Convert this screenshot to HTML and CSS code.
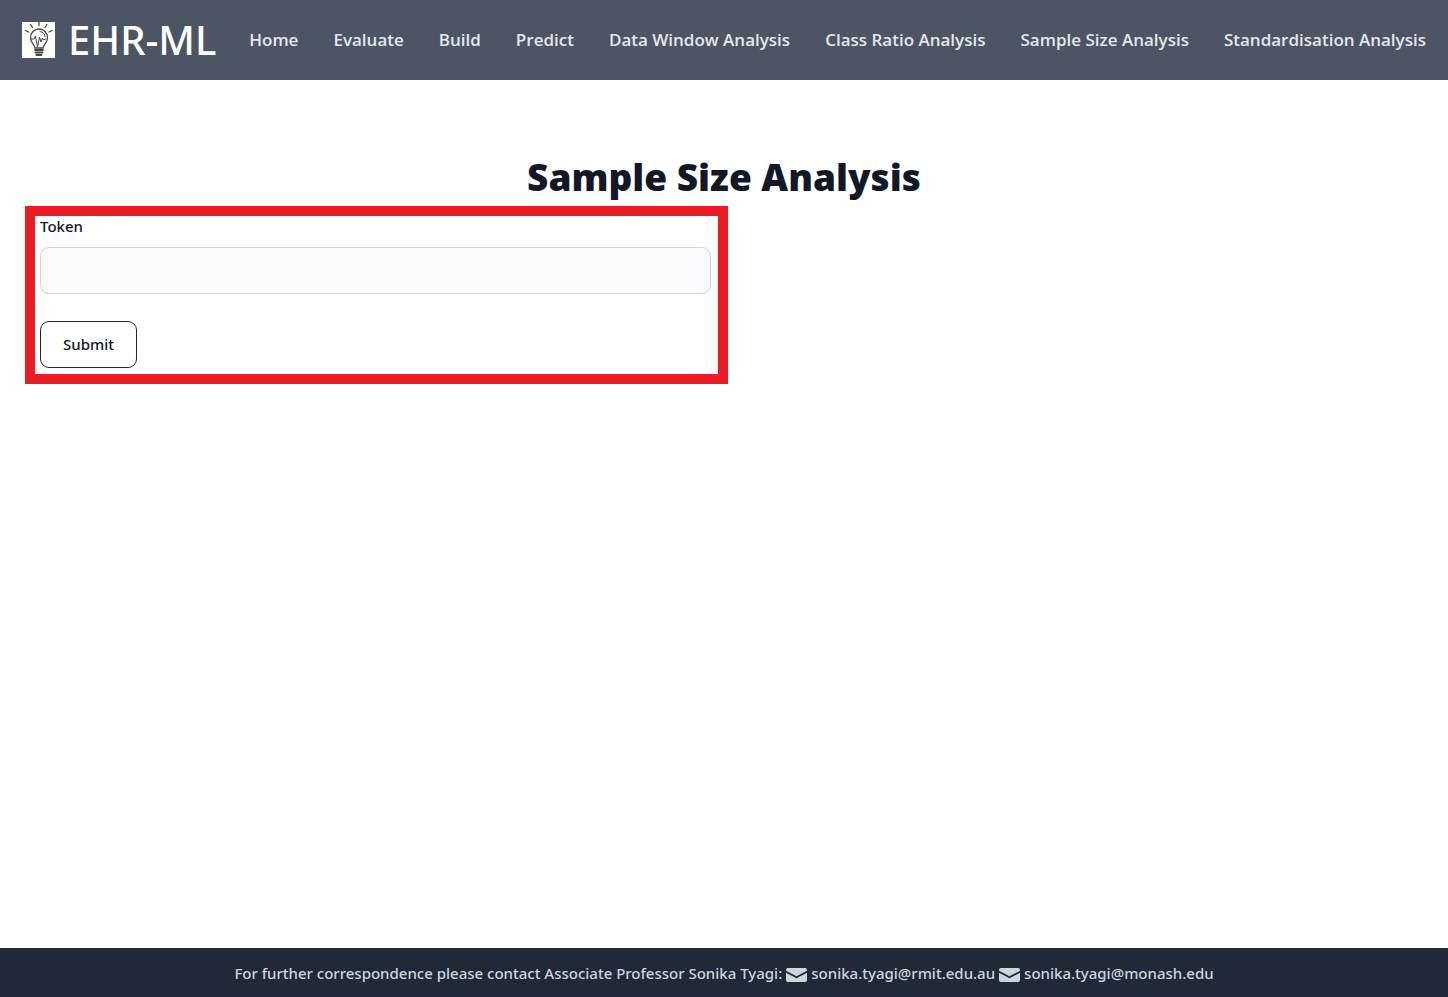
FILE: index.html
```html
<!DOCTYPE html>
<html lang="en">
<head>
<meta charset="utf-8">
<title>EHR-ML</title>
<link rel="stylesheet" href="styles.css">
</head>
<body>
<header class="navbar">
  <a class="brand" href="#">
    <svg class="brand-logo" viewBox="0 0 33 36" aria-hidden="true">
      <path fill="#fff" d="M0 0h33v36H0z"/>
      <g fill="none" stroke="#444" stroke-width="1.3" stroke-linecap="round">
        <path d="M17 .5v3M8.500 2.500l2 3M25 2.500l-2 3M3.500 8.500l3 1.500M30 8.500l-3 1.500"/>
        <path d="M13 26c0-3-4.500-5-4.500-10.500a8.500 8.500 0 0 1 17 0C25.500 21 21 23 21 26z"/>
        <path stroke-width="1" d="M9 17h3l1.500-3 2 11 2-10 1.500 5 1.500-4 1 2 2-1M18 9.500c3 .5 5 2.500 5 5"/>
        <path stroke-width="1.800" d="M13 28h8M13.500 30.500h7M14.500 33h5"/>
      </g>
    </svg>
    <span>EHR-ML</span>
  </a>
  <nav class="nav-links">
    <a href="#">Home</a>
    <a href="#">Evaluate</a>
    <a href="#">Build</a>
    <a href="#">Predict</a>
    <a href="#">Data Window Analysis</a>
    <a href="#">Class Ratio Analysis</a>
    <a href="#">Sample Size Analysis</a>
    <a href="#">Standardisation Analysis</a>
  </nav>
</header>
<main class="content">
  <h1 class="title">Sample Size Analysis</h1>
  <form class="token-form">
    <label class="label" for="token">Token</label>
    <input class="field" id="token" type="text">
    <button class="submit" type="submit">Submit</button>
  </form>
</main>
<footer class="footer">
  <span>For further correspondence please contact Associate Professor Sonika Tyagi:</span>
  <a class="mail" href="mailto:sonika.tyagi@rmit.edu.au">
    <svg class="mail-icon" viewBox="0 0 21 14" aria-hidden="true"><path d="M2 0h17a2 2 0 0 1 2 2v.8L10.500 8.300 0 2.800V2a2 2 0 0 1 2-2z"/><path d="M0 4.800l10.500 5.500L21 4.800V12a2 2 0 0 1-2 2H2a2 2 0 0 1-2-2z"/></svg>
    <span>sonika.tyagi@rmit.edu.au</span>
  </a>
  <a class="mail" href="mailto:sonika.tyagi@monash.edu">
    <svg class="mail-icon" viewBox="0 0 21 14" aria-hidden="true"><path d="M2 0h17a2 2 0 0 1 2 2v.8L10.500 8.300 0 2.800V2a2 2 0 0 1 2-2z"/><path d="M0 4.800l10.500 5.500L21 4.800V12a2 2 0 0 1-2 2H2a2 2 0 0 1-2-2z"/></svg>
    <span>sonika.tyagi@monash.edu</span>
  </a>
</footer>
</body>
</html>
```
FILE: styles.css
```css
* {
  box-sizing: border-box;
}

body {
  margin: 0;
  min-height: 100vh;
  display: flex;
  flex-direction: column;
  background: #fff;
  color: #111827;
  font-family: "Noto Sans", "Open Sans", sans-serif;
  font-size: 15px;
}

a {
  color: inherit;
  text-decoration: none;
  white-space: nowrap;
}

.navbar {
  display: flex;
  align-items: center;
  justify-content: space-between;
  min-height: 80px;
  padding: 0 22px;
  background: #4b5563;
}

.brand {
  display: flex;
  align-items: center;
  gap: 13px;
  color: #fff;
  font-size: 40px;
  font-weight: 500;
  line-height: 48px;
}

.brand-logo {
  width: 33px;
  height: 36px;
}

.nav-links {
  display: flex;
  gap: 35px;
  color: #e5e7eb;
  font-family: "Open Sans", "Noto Sans", sans-serif;
  font-size: 17px;
  font-weight: 600;
  line-height: 24px;
}

.content {
  flex: 1;
  padding: 72px 25px 0;
}

.title {
  margin: 0 0 4px;
  font-family: "Open Sans", "Noto Sans", sans-serif;
  font-size: 37px;
  font-weight: 800;
  line-height: 50px;
  text-align: center;
}

.token-form {
  display: flex;
  flex-direction: column;
  width: calc(50% + 4px);
  padding: 0 7px 6px 5px;
  border: 10px solid #ed1c24;
}

.label {
  align-self: flex-start;
  margin-bottom: 11px;
  font-weight: 500;
  line-height: 20px;
}

.field {
  width: 100%;
  height: 47px;
  padding: 0 12px;
  border: 1px solid #d1d5db;
  border-radius: 9px;
  background: #f9fafb;
  font: inherit;
}

.submit {
  align-self: flex-start;
  margin-top: 27px;
  padding: 11px 22px;
  border: 1px solid #1f2937;
  border-radius: 9px;
  background: #fff;
  color: #111827;
  font: inherit;
  font-weight: 500;
  line-height: 23px;
}

.footer {
  display: flex;
  align-items: center;
  justify-content: center;
  gap: 4px;
  min-height: 49px;
  background: #1f2937;
  color: #d1d5db;
  font-weight: 500;
  line-height: 24px;
}

.mail {
  display: flex;
  align-items: center;
  gap: 4px;
}

.mail-icon {
  width: 21px;
  height: 14px;
  margin-top: 4px;
  fill: #d1d5db;
}
```
